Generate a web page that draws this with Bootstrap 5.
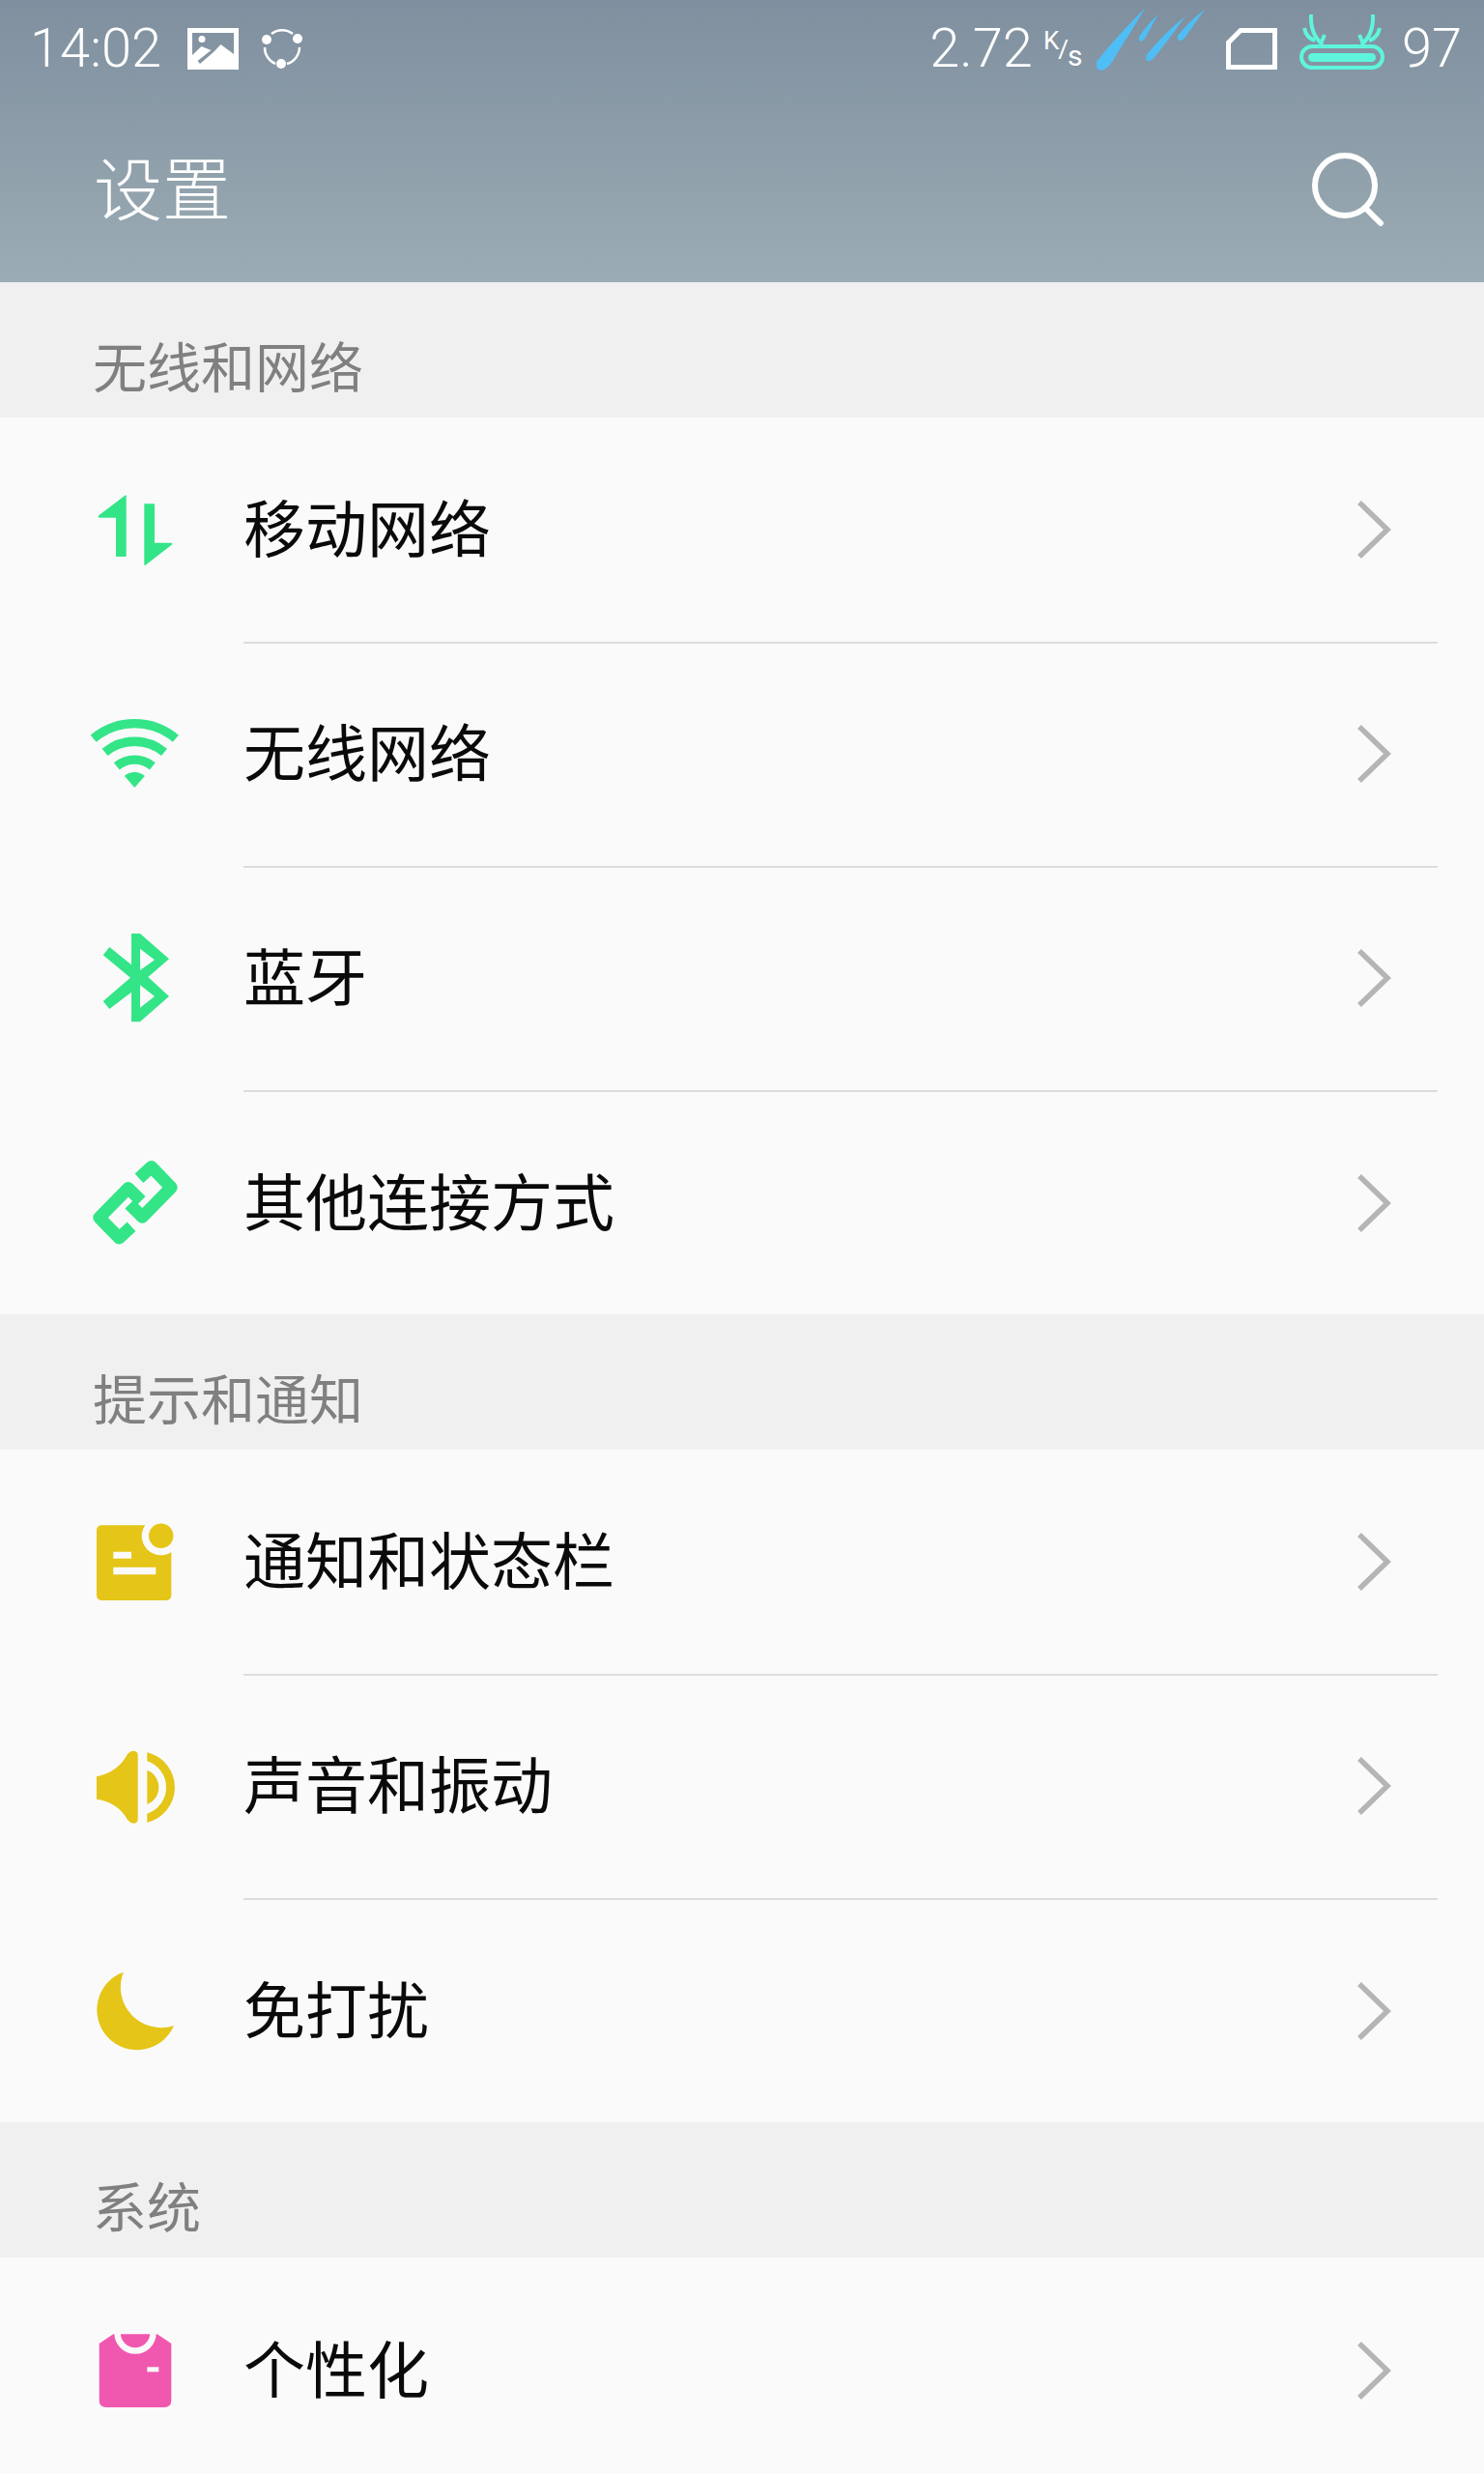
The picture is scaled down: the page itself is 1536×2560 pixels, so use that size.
<!DOCTYPE html>
<html lang="zh-CN">
<head>
  <meta charset="UTF-8">
  <title>设置</title>
  <link href="https://cdn.jsdelivr.net/npm/bootstrap@5.3.3/dist/css/bootstrap.min.css" rel="stylesheet">
  <style>
    body {
      background-color: #fafafa;
      font-family: "Noto Sans CJK SC", "Liberation Sans", sans-serif;
      height: 2560px;
      overflow: hidden;
    }
    .app-head {
      height: 292px;
      background: linear-gradient(#7f8f9f, #9bacb4);
      color: #fff;
    }
    .status-row {
      height: 100px;
      padding: 0 23px 0 31px;
      font-family: Roboto, "Liberation Sans", sans-serif;
      font-weight: 350;
      font-size: 56px;
      line-height: 1;
    }
    .status-time { width: 163px; }
    .speed-unit {
      width: 39px;
      margin-left: 11px;
      font-size: 26px;
      font-weight: 400;
      letter-spacing: -1px;
      white-space: nowrap;
    }
    .speed-unit span { display: inline-block; }
    .speed-unit .su-k { transform: translateY(-9px); }
    .speed-unit .su-s { transform: translateY(8px); font-size: 30px; }
    .rain-ico { margin: 0 0 20px 16px; }
    .sim-ico { margin-left: 21px; }
    .batt-ico { margin: 0 0 14px 23px; }
    .batt-num { margin-left: 18px; }
    .title-row {
      height: 192px;
      padding: 0 102px 0 97px;
    }
    .title-text {
      font-size: 71px;
      font-weight: 300;
      line-height: 1;
      margin-bottom: 10px;
    }
    .sec-head {
      height: 140px;
      padding: 0 0 27px 96px;
      background-color: #f0f0f0;
      color: #808080;
      font-size: 56px;
      line-height: 1;
    }
    .set-list { background-color: #fafafa; }
    .set-row {
      height: 232px;
      padding: 0 !important;
      background-color: transparent;
      color: #0a0a0a;
      border: 0;
      font-size: 64px;
      line-height: 1;
    }
    .set-row svg.ico { width: 160px; height: 160px; margin: 0 32px 0 60px; flex: none; }
    .set-body {
      height: 234px;
      margin: 0 48px -2px 0;
      padding-right: 47px;
      border-bottom: 2px solid #dcdcdc;
    }
    .set-body > span { margin-bottom: 10px; }
    .set-row:last-child .set-body { border-bottom: 0; margin-right: 0; padding-right: 95px; }
    .chev { width: 37px; height: 64px; fill: none; stroke: #b5b5b5; stroke-width: 5.5; }
    .g-fill { fill: #33e587; }
    .y-fill { fill: #e5c517; }
  </style>
</head>
<body>

<header class="app-head d-flex flex-column">
  <div class="status-row d-flex align-items-center">
    <span class="status-time">14:02</span>
    <!-- album -->
    <svg width="53" height="43" viewBox="0 0 53 43">
      <path fill="#fff" fill-rule="evenodd" d="M0 0H53V43H0ZM5 5V28L14.5 19L24.5 23L10.5 34L13 37L28 24L34.5 17L48 27V5Z"/>
      <circle cx="15" cy="11.5" r="3.5" fill="#fff"/>
    </svg>
    <!-- sync -->
    <svg width="42" height="42" viewBox="0 0 42 42" class="ms-4" fill="none" stroke="#fff" stroke-width="2.5">
      <path d="M10 6A18 18 0 0 1 32 6M39 20A18 18 0 0 1 26 37M14 37A18 18 0 0 1 3 20"/>
      <g fill="#fff" stroke="none"><circle cx="5" cy="12" r="5"/><circle cx="37" cy="11" r="5"/><circle cx="20" cy="37" r="5"/></g>
    </svg>
    <span class="ms-auto">2.72</span>
    <span class="speed-unit"><span class="su-k">K</span><span>/</span><span class="su-s">s</span></span>
    <!-- signal drops -->
    <svg width="113" height="65" viewBox="0 0 113 65" class="rain-ico" fill="#4fbef5">
      <path d="M50.7 0Q24 26 .5 55Q-2 65 5 64.7Q11 64 16 56Q34 27 50.7 0Z"/>
      <path d="M63.7 7Q51 19 44 30Q43.5 36 47 34.5Q49 34 51 30Z"/>
      <path d="M92 8.7Q68 28 51.5 49Q50 56 55 55Q58 54 61 50Q77 30 92 8.7Z"/>
      <path d="M112.4 1.3Q95 15 84 29Q83.5 35 87 34Q90 33 92 30Z"/>
    </svg>
    <!-- sim -->
    <svg width="53" height="43" viewBox="0 0 53 43" class="sim-ico" fill="none" stroke="#fff" stroke-width="5">
      <path d="M2.5 15L15 2.5H50.5V40.5H2.5Z"/>
    </svg>
    <!-- battery -->
    <svg width="88" height="58" viewBox="0 0 88 58" class="batt-ico" fill="none" stroke="#5ef5dc" stroke-width="4">
      <rect x="2" y="34" width="84" height="22" rx="11"/>
      <rect x="9" y="41" width="70" height="9" rx="4.5" fill="#5ef5dc" stroke="none"/>
      <path d="M12 1Q11 22 24 32M5 15Q7 25 16 28M26 22L23 29"/>
      <path d="M76 1Q77 22 64 32M83 15Q81 25 72 28M62 22L65 29"/>
    </svg>
    <span class="batt-num">97</span>
  </div>
  <div class="title-row d-flex align-items-center justify-content-between">
    <span class="title-text">设置</span>
    <svg width="76" height="76" viewBox="0 0 76 76" fill="none" stroke="#fff" stroke-width="6">
      <circle cx="34" cy="34" r="31"/>
      <path d="M55 57L71 73" stroke-linecap="round"/>
    </svg>
  </div>
</header>

<main>
  <div class="sec-head d-flex align-items-end">无线和网络</div>
  <div class="list-group list-group-flush rounded-0 set-list">
    <a class="list-group-item set-row d-flex align-items-center" href="#">
      <svg class="ico g-fill" viewBox="0 0 160 160"><path d="M70 44.3A1 1 0 0 1 70.7 45V107A1 1 0 0 1 69.7 108H61A1 1 0 0 1 60 107V67.7H42.5Q41 66.5 42 65.5ZM89.3 53.3H99A1 1 0 0 1 100 54.3V93.7H117.5Q119 94.5 118 95.5L90.3 117Q89.3 117.2 89.3 116Z"/></svg>
      <div class="set-body flex-grow-1 d-flex align-items-center justify-content-between"><span>移动网络</span>
        <svg class="chev" viewBox="0 0 37 64"><path d="M3 4L32 32L3 60"/></svg></div>
    </a>
    <a class="list-group-item set-row d-flex align-items-center" href="#">
      <svg class="ico" viewBox="0 0 160 160"><g fill="none" stroke="#33e587" stroke-width="9.3"><path d="M36.7 64.2A66.3 66.3 0 0 1 121.9 64.2"/><path d="M48.6 78.4A47.8 47.8 0 0 1 110 78.4"/><path d="M60.8 92.9A28.8 28.8 0 0 1 97.8 92.9"/></g><path class="g-fill" d="M79.3 115L68.8 103A15.5 15.5 0 0 1 89.8 103Z"/></svg>
      <div class="set-body flex-grow-1 d-flex align-items-center justify-content-between"><span>无线网络</span>
        <svg class="chev" viewBox="0 0 37 64"><path d="M3 4L32 32L3 60"/></svg></div>
    </a>
    <a class="list-group-item set-row d-flex align-items-center" href="#">
      <svg class="ico g-fill" viewBox="0 0 160 160"><path fill-rule="evenodd" d="M76 34H85L115 60.3L93.3 79L115 99L85 125.3H76V94.7L53.3 112L46.7 104L75 79.7L46.7 56.3L53.3 48L76 66.3ZM85 49.7V72L100 61.3ZM85 87.3V110.7L100 99Z"/></svg>
      <div class="set-body flex-grow-1 d-flex align-items-center justify-content-between"><span>蓝牙</span>
        <svg class="chev" viewBox="0 0 37 64"><path d="M3 4L32 32L3 60"/></svg></div>
    </a>
    <a class="list-group-item set-row d-flex align-items-center" href="#">
      <svg class="ico" viewBox="0 0 160 160"><g fill="none" stroke="#33e587" stroke-width="13" stroke-linejoin="round"><path d="M86 78.7L72.7 65.5L42.8 96L63.3 117L76 105.3"/><path d="M74 82L87.3 95.2L117.2 64.7L96.7 43.5L84 55.3"/></g></svg>
      <div class="set-body flex-grow-1 d-flex align-items-center justify-content-between"><span>其他连接方式</span>
        <svg class="chev" viewBox="0 0 37 64"><path d="M3 4L32 32L3 60"/></svg></div>
    </a>
  </div>

  <div class="sec-head d-flex align-items-end">提示和通知</div>
  <div class="list-group list-group-flush rounded-0 set-list">
    <a class="list-group-item set-row d-flex align-items-center" href="#">
      <svg class="ico" viewBox="0 0 160 160"><rect class="y-fill" x="40" y="42.3" width="77.3" height="77.7" rx="5"/><circle cx="106.7" cy="53.3" r="20" fill="#fafafa"/><circle class="y-fill" cx="106.7" cy="53.3" r="12.7"/><path fill="#fafafa" d="M57.3 69.7H76V76.7H57.3ZM57.3 85.7H101.3V93.3H57.3Z"/></svg>
      <div class="set-body flex-grow-1 d-flex align-items-center justify-content-between"><span>通知和状态栏</span>
        <svg class="chev" viewBox="0 0 37 64"><path d="M3 4L32 32L3 60"/></svg></div>
    </a>
    <a class="list-group-item set-row d-flex align-items-center" href="#">
      <svg class="ico y-fill" viewBox="0 0 160 160"><path d="M40 70.3Q62 66 72 47Q75 43.7 78 43.7Q82.7 44 82.7 48V114Q82.7 118.7 78 118.7Q75 118.7 72 115Q62 97 40 93.7Z"/><path d="M92.3 45.3A37.2 37.2 0 0 1 92.3 117.7V108.7A28.6 28.6 0 0 0 92.3 54.3Z"/><path d="M92.3 63.7A19.2 19.2 0 0 1 92.3 99.3Z"/></svg>
      <div class="set-body flex-grow-1 d-flex align-items-center justify-content-between"><span>声音和振动</span>
        <svg class="chev" viewBox="0 0 37 64"><path d="M3 4L32 32L3 60"/></svg></div>
    </a>
    <a class="list-group-item set-row d-flex align-items-center" href="#">
      <svg class="ico y-fill" viewBox="0 0 160 160"><path d="M67.7 40.7A41.5 41.5 0 1 0 120 96A42 42 0 0 1 67.7 40.7Z"/></svg>
      <div class="set-body flex-grow-1 d-flex align-items-center justify-content-between"><span>免打扰</span>
        <svg class="chev" viewBox="0 0 37 64"><path d="M3 4L32 32L3 60"/></svg></div>
    </a>
  </div>

  <div class="sec-head d-flex align-items-end">系统</div>
  <div class="list-group list-group-flush rounded-0 set-list">
    <a class="list-group-item set-row d-flex align-items-center" href="#">
      <svg class="ico" viewBox="0 0 160 160"><path fill="#f058b0" d="M42.7 53L57.3 43.3H102.7L117.3 53V112Q117.3 119 110 119H50Q42.7 119 42.7 112Z"/><path fill="none" stroke="#fafafa" stroke-width="6.5" d="M61.5 42A18.5 18.5 0 0 0 98.5 42"/><path fill="#fafafa" d="M92.3 77.3H104.3V82.3H92.3Z"/></svg>
      <div class="set-body flex-grow-1 d-flex align-items-center justify-content-between"><span>个性化</span>
        <svg class="chev" viewBox="0 0 37 64"><path d="M3 4L32 32L3 60"/></svg></div>
    </a>
  </div>
</main>

<script src="https://cdn.jsdelivr.net/npm/bootstrap@5.3.3/dist/js/bootstrap.bundle.min.js"></script>
</body>
</html>
